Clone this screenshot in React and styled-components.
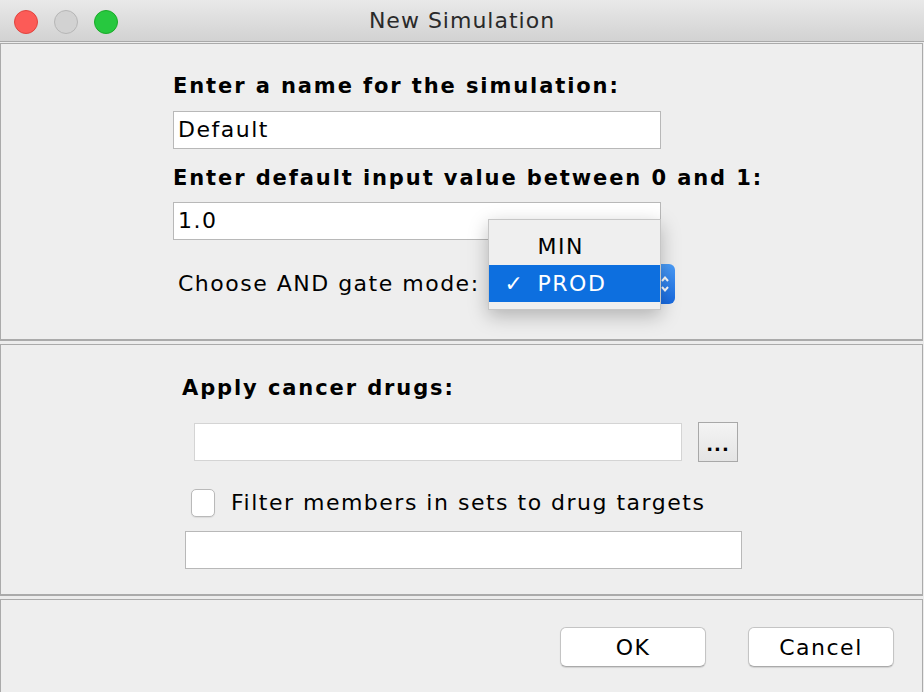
import styled, { createGlobalStyle } from "styled-components";

const Global = createGlobalStyle`
  html, body { margin: 0; padding: 0; background: #ececec; }
  body { font-family: "DejaVu Sans", "Lucida Grande", sans-serif; color: #000; }
`;

const Window = styled.div`
  width: 924px;
  height: 692px;
  display: flex;
  flex-direction: column;
  background: #ececec;
  overflow: hidden;
`;

const TitleBar = styled.div`
  height: 41px;
  flex: none;
  display: flex;
  align-items: center;
  position: relative;
  background: linear-gradient(#e9e9e9, #d2d2d2);
  border-bottom: 1px solid #a9a9a9;
`;

const Lights = styled.div`
  display: flex;
  gap: 16px;
  padding-left: 14px;
  margin-top: 2px;
`;

const Light = styled.span`
  width: 22px;
  height: 22px;
  border-radius: 50%;
  background: ${(p) => p.$bg};
  border: 1px solid ${(p) => p.$edge};
`;

const Title = styled.div`
  position: absolute;
  left: 0;
  right: 0;
  text-align: center;
  font-size: 22px;
  letter-spacing: 1px;
  color: #2a2a2a;
`;

const Body = styled.div`
  flex: 1;
  display: flex;
  flex-direction: column;
  gap: 3px;
  padding: 1px 1px 0 0;
`;

const Panel = styled.div`
  border: 1px solid #aaaaaa;
  border-bottom-width: 2px;
  background: #eeeeee;
  height: ${(p) => p.$h}px;
  padding: ${(p) => p.$pad};
  display: flex;
  flex-direction: column;
  box-sizing: border-box;
  flex: none;
`;

const Label = styled.div`
  font-size: ${(p) => (p.$bold ? 21 : 22)}px;
  font-weight: ${(p) => (p.$bold ? "bold" : "normal")};
  letter-spacing: ${(p) => (p.$bold ? 1.9 : 1.5)}px;
  line-height: 26px;
  margin: ${(p) => p.$m || "0"};
  white-space: nowrap;
`;

const Field = styled.div`
  width: ${(p) => p.$w}px;
  height: 38px;
  box-sizing: border-box;
  background: #fff;
  border: 1px solid ${(p) => (p.$dim ? "#d4d4d4" : "#b8b8b8")};
  margin: ${(p) => p.$m || "0"};
  font-size: 22px;
  letter-spacing: 1.5px;
  line-height: 36px;
  padding-left: 4px;
  flex: none;
`;

const Row = styled.div`
  display: flex;
  align-items: center;
  margin: ${(p) => p.$m || "0"};
`;

const ComboWrap = styled.div`
  position: relative;
  margin-left: 9px;
`;

const Combo = styled.div`
  width: 186px;
  height: 40px;
  border-radius: 6px;
  background: linear-gradient(#4a9cf8, #1769e0);
  box-sizing: border-box;
  display: flex;
  justify-content: flex-end;
  align-items: center;
  padding-right: 5px;
  color: #fff;
`;

const Popup = styled.div`
  position: absolute;
  left: -1px;
  top: -45px;
  width: 173px;
  background: #efefef;
  border: 1px solid #c6c6c6;
  box-shadow: 0 6px 18px rgba(0, 0, 0, 0.25);
  padding: 8px 0 7px;
  box-sizing: border-box;
`;

const Item = styled.div`
  height: 37px;
  display: flex;
  align-items: center;
  font-size: 22px;
  letter-spacing: 1.5px;
  padding-left: 16px;
  background: ${(p) => (p.$on ? "#0d6fdf" : "transparent")};
  color: ${(p) => (p.$on ? "#fff" : "#000")};
`;

const Check = styled.span`
  width: 33px;
  font-size: 22px;
`;

const DotsButton = styled.div`
  width: 40px;
  height: 40px;
  box-sizing: border-box;
  border: 1px solid #a8a8a8;
  background: linear-gradient(#f4f4f4, #e4e4e4);
  margin-left: 16px;
  font-size: 18px;
  font-weight: bold;
  display: flex;
  align-items: center;
  justify-content: center;
  padding-top: 4px;
  letter-spacing: 1px;
`;

const CheckBox = styled.span`
  width: 24px;
  height: 28px;
  box-sizing: border-box;
  border: 1px solid #b9b9b9;
  border-radius: 5px;
  background: #fff;
  margin-right: 16px;
  box-shadow: 0 1px 1px rgba(0, 0, 0, 0.08);
`;

const Buttons = styled.div`
  display: flex;
  justify-content: flex-end;
  gap: 42px;
  padding: 27px 28px 0 0;
`;

const Button = styled.div`
  width: 146px;
  height: 40px;
  box-sizing: border-box;
  background: #fff;
  border: 1px solid #c4c4c4;
  border-bottom-color: #aaaaaa;
  border-radius: 6px;
  box-shadow: 0 1px 1px rgba(0, 0, 0, 0.12);
  display: flex;
  align-items: center;
  justify-content: center;
  font-size: 22px;
  letter-spacing: 1.5px;
`;

function Chevrons() {
  return (
    <svg width="10" height="22" viewBox="0 0 10 22">
      <path d="M2 8 L5 4.5 L8 8 M2 14 L5 17.5 L8 14" stroke="#fff" strokeWidth="2" fill="none" />
    </svg>
  );
}

export default function App() {
  return (
    <>
      <Global />
      <Window>
        <TitleBar>
          <Lights>
            <Light $bg="#fc5b57" $edge="#e0443e" />
            <Light $bg="#d2d2d2" $edge="#b6b6b6" />
            <Light $bg="#27c83f" $edge="#1aab29" />
          </Lights>
          <Title>New Simulation</Title>
        </TitleBar>
        <Body>
          <Panel $h={298} $pad="29px 0 0 172px">
            <Label $bold>Enter a name for the simulation:</Label>
            <Field $w={488} $m="12px 0 0">Default</Field>
            <Label $bold $m="16px 0 0">Enter default input value between 0 and 1:</Label>
            <Field $w={488} $m="11px 0 0">1.0</Field>
            <Row $m="24px 0 0 5px">
              <Label>Choose AND gate mode:</Label>
              <ComboWrap>
                <Combo>
                  <Chevrons />
                </Combo>
                <Popup>
                  <Item>
                    <Check />
                    MIN
                  </Item>
                  <Item $on>
                    <Check>✓</Check>
                    PROD
                  </Item>
                </Popup>
              </ComboWrap>
            </Row>
          </Panel>
          <Panel $h={252} $pad="30px 0 0 181px">
            <Label $bold>Apply cancer drugs:</Label>
            <Row $m="21px 0 0 12px">
              <Field $w={488} $dim />
              <DotsButton>...</DotsButton>
            </Row>
            <Row $m="27px 0 0 9px">
              <CheckBox />
              <Label>Filter members in sets to drug targets</Label>
            </Row>
            <Field $w={557} $m="14px 0 0 3px" />
          </Panel>
          <Panel $h={100} $pad="0">
            <Buttons>
              <Button>OK</Button>
              <Button>Cancel</Button>
            </Buttons>
          </Panel>
        </Body>
      </Window>
    </>
  );
}
